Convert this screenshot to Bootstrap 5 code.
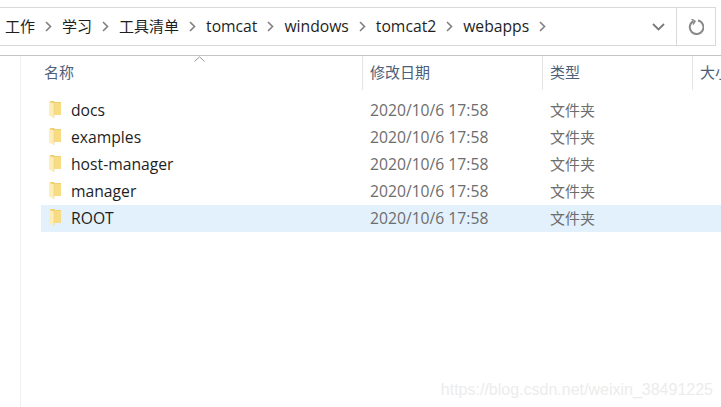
<!DOCTYPE html>
<html lang="zh-CN">
<head>
    <meta charset="UTF-8">
    <meta name="viewport" content="width=device-width, initial-scale=1.0">
    <title>webapps</title>
    <link rel="stylesheet" href="https://cdn.jsdelivr.net/npm/bootstrap@5.3.2/dist/css/bootstrap.min.css">
    <style>
        html, body {
            height: 407px;
            overflow: hidden;
            background: #fff;
        }
        body {
            position: relative;
            font-family: "Open Sans", "Noto Sans CJK SC", sans-serif;
            font-size: 15px;
            color: #1e1e1e;
        }
        .lat {
            font-size: 15.7px;
        }
        .addr-wrap {
            height: 56px;
            padding-top: 7px;
            padding-right: 5px;
            border-bottom: 1px solid #c4c4c4;
        }
        .addr-box {
            height: 39px;
            border: 1px solid #d9d9d9;
            border-left: 0;
        }
        .crumbs {
            padding-left: 5px;
            gap: 10px;
        }
        .crumb-sep {
            width: 7px;
            height: 11px;
        }
        .addr-drop {
            width: 36px;
        }
        .addr-refresh {
            width: 39px;
            border-left: 1px solid #d9d9d9;
        }
        .file-area {
            margin-left: 20px;
            height: 351px;
            border-left: 1px solid #efefef;
            position: relative;
        }
        .head-row {
            height: 34px;
            padding-left: 20px;
        }
        .head-cell {
            color: #4c607a;
            padding-left: 3px;
            padding-top: 5px;
            flex: none;
            white-space: nowrap;
            overflow: hidden;
        }
        .head-cell + .head-cell {
            border-left: 1px solid #e5e5e5;
            padding-left: 7px;
        }
        .w-name { width: 321px; }
        .w-date { width: 180px; }
        .w-type { width: 150px; }
        .w-size { width: 29px; }
        .sort-caret {
            position: absolute;
            left: 173px;
            top: 0;
            width: 11px;
            height: 6px;
        }
        .file-list {
            margin-top: 7px;
            margin-left: 20px;
        }
        .file-row {
            height: 27px;
        }
        .file-row.picked {
            background: #e3f1fc;
        }
        .cell-name {
            width: 321px;
            padding-left: 7px;
            gap: 9px;
        }
        .cell-date {
            width: 180px;
            padding-left: 8px;
            color: #6d6d6d;
        }
        .cell-type {
            padding-left: 8px;
            color: #6d6d6d;
        }
        .folder-ico {
            width: 14px;
            height: 18px;
            margin-top: -3px;
        }
        .watermark {
            position: absolute;
            right: 8px;
            bottom: 5px;
            font-family: "Liberation Sans", sans-serif;
            font-size: 16px;
            color: #ececec;
        }
    </style>
</head>
<body>
    <div class="addr-wrap">
        <div class="addr-box d-flex align-items-stretch">
            <div class="crumbs d-flex align-items-center flex-grow-1" id="crumbs"></div>
            <div class="addr-drop d-flex align-items-center justify-content-center">
                <svg width="13" height="8" viewBox="0 0 13 8"><path d="M1 1l5.500 5.500L12 1" fill="none" stroke="#7a7a7a" stroke-width="1.800"/></svg>
            </div>
            <div class="addr-refresh d-flex align-items-center justify-content-center">
                <svg width="16" height="16" viewBox="0 0 16 16"><path d="M5.500 2.200A6.800 6.800 0 1 0 10 1.600" fill="none" stroke="#8a8a8a" stroke-width="2"/><path d="M3.500 .2L7 2.200 5 5.500" fill="none" stroke="#8a8a8a" stroke-width="1.500"/></svg>
            </div>
        </div>
    </div>
    <div class="file-area">
        <svg class="sort-caret" viewBox="0 0 11 6"><path d="M.5 5.500L5.500 .8l5 4.700" fill="none" stroke="#9a9a9a"/></svg>
        <div class="head-row d-flex">
            <div class="head-cell w-name">名称</div>
            <div class="head-cell w-date">修改日期</div>
            <div class="head-cell w-type">类型</div>
            <div class="head-cell w-size">大小</div>
        </div>
        <div class="file-list" id="fileList"></div>
    </div>
    <div class="watermark">https://blog.csdn.net/weixin_38491225</div>

    <script src="https://cdn.jsdelivr.net/npm/bootstrap@5.3.2/dist/js/bootstrap.bundle.min.js"></script>
    <script>
        const trilha = ["工作", "学习", "工具清单", "tomcat", "windows", "tomcat2", "webapps"];
        const pastas = ["docs", "examples", "host-manager", "manager", "ROOT"];
        const seta = '<svg class="crumb-sep" viewBox="0 0 7 11"><path d="M1 1l4.500 4.500L1 10" fill="none" stroke="#808080" stroke-width="1.600"/></svg>';
        // pasta: aba escura atras, painel claro inclinado na frente
        const pasta = '<svg class="folder-ico" viewBox="0 0 14 18">' +
            '<path d="M2 1h4l1 1h6v13H2z" fill="#efcf74"/>' +
            '<path d="M6 3h7v12H6z" fill="#f8dc84"/>' +
            '<path d="M1 2l5 1.500V18L1 15.500z" fill="#fdeeb8"/>' +
            '<path d="M6 3.500V18" stroke="#f0d284" stroke-width=".6"/></svg>';

        document.getElementById("crumbs").innerHTML = trilha.map(t => `<span class="${/^[a-z]/.test(t) ? "lat" : ""}">${t}</span>${seta}`).join("");
        document.getElementById("fileList").innerHTML = pastas.map(nome => `
            <div class="file-row d-flex align-items-center ${nome === "ROOT" ? "picked" : ""}">
                <div class="cell-name d-flex align-items-center">${pasta}<span class="lat">${nome}</span></div>
                <div class="cell-date lat">2020/10/6 17:58</div>
                <div class="cell-type">文件夹</div>
            </div>`).join("");
    </script>
</body>
</html>
